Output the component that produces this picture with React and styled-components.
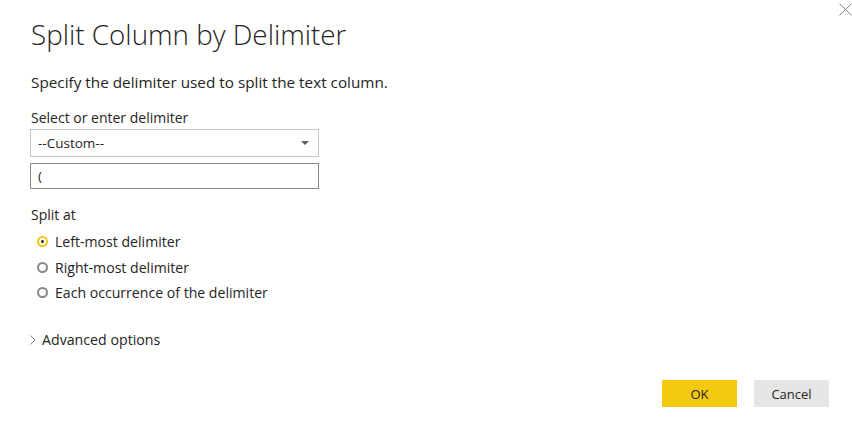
import React, { useState } from "react";
import styled, { createGlobalStyle } from "styled-components";

const GlobalStyle = createGlobalStyle`
  html, body {
    margin: 0;
    padding: 0;
    background: #fff;
  }
  body {
    font-family: "Open Sans", "Noto Sans", sans-serif;
    color: #252423;
  }
`;

const Dialog = styled.div`
  position: relative;
  width: 852px;
  height: 427px;
  box-sizing: border-box;
  padding: 14px 23px 0 31px;
  display: flex;
  flex-direction: column;
  background: #fff;
`;

const CloseButton = styled.button`
  position: absolute;
  top: 1px;
  right: -1px;
  width: 16px;
  height: 16px;
  padding: 0;
  border: none;
  background: none;
  display: flex;
  align-items: center;
  justify-content: center;
  cursor: pointer;
`;

const Title = styled.h1`
  margin: 0;
  font-size: 27.8px;
  font-weight: 300;
  line-height: 40px;
  color: #252423;
`;

const Description = styled.p`
  margin: 18px 0 0;
  font-size: 15.3px;
  line-height: 20px;
`;

const Label = styled.div`
  margin-top: ${(p) => p.$top || 0}px;
  font-size: 14px;
  line-height: 20px;
`;

const Field = styled.div`
  width: 289px;
  height: ${(p) => p.$height}px;
  box-sizing: border-box;
  border: 1px solid ${(p) => (p.$dark ? "#8a8886" : "#c8c6c4")};
  margin-top: ${(p) => p.$top || 0}px;
  margin-left: -1px;
  display: flex;
  align-items: center;
  justify-content: space-between;
  padding: 0 9px 0 7px;
  font-size: 13.5px;
`;

const Caret = styled.span`
  width: 0;
  height: 0;
  border-left: 4px solid transparent;
  border-right: 4px solid transparent;
  border-top: 4px solid #605e5c;
`;

const RadioList = styled.div`
  display: flex;
  flex-direction: column;
  margin-top: 4px;
  padding-left: 6px;
`;

const RadioRow = styled.label`
  display: flex;
  align-items: center;
  gap: 7px;
  height: 25.5px;
  font-size: 14.1px;
  cursor: pointer;
`;

const RadioCircle = styled.span`
  width: 11px;
  height: 11px;
  box-sizing: border-box;
  border-radius: 50%;
  border: 2px solid ${(p) => (p.$checked ? "#f2c811" : "#8a8886")};
  display: flex;
  align-items: center;
  justify-content: center;

  &::after {
    content: "";
    width: 3px;
    height: 3px;
    border-radius: 50%;
    background: ${(p) => (p.$checked ? "#252423" : "transparent")};
  }
`;

const Advanced = styled.div`
  margin-top: 24px;
  display: flex;
  align-items: center;
  gap: 6px;
  font-size: 14.2px;
  line-height: 20px;
  margin-left: -1px;
`;

const Footer = styled.div`
  margin-top: auto;
  margin-bottom: 20px;
  display: flex;
  justify-content: flex-end;
  gap: 17px;
`;

const Button = styled.button`
  width: 75px;
  height: 27px;
  border: none;
  padding: 0;
  font-family: inherit;
  font-size: 13px;
  color: #252423;
  background: ${(p) => (p.$primary ? "#f2c811" : "#e6e6e6")};
  cursor: pointer;
`;

const options = [
  "Left-most delimiter",
  "Right-most delimiter",
  "Each occurrence of the delimiter",
];

export default function App() {
  const [split, setSplit] = useState(0);
  return (
    <>
      <GlobalStyle />
      <Dialog>
        <CloseButton aria-label="Close">
          <svg width="13" height="13" viewBox="0 0 13 13">
            <path d="M0.5 0.5 L12.5 12.5 M12.5 0.5 L0.5 12.5" stroke="#8a8886" strokeWidth="1" />
          </svg>
        </CloseButton>
        <Title>Split Column by Delimiter</Title>
        <Description>Specify the delimiter used to split the text column.</Description>
        <Label $top={16}>Select or enter delimiter</Label>
        <Field $height={28} $top={1}>
          <span>--Custom--</span>
          <Caret />
        </Field>
        <Field $height={26} $top={6} $dark>
          <span>(</span>
        </Field>
        <Label $top={16}>Split at</Label>
        <RadioList>
          {options.map((o, i) => (
            <RadioRow key={o} onClick={() => setSplit(i)}>
              <RadioCircle $checked={split === i} />
              {o}
            </RadioRow>
          ))}
        </RadioList>
        <Advanced>
          <svg width="6" height="10" viewBox="0 0 6 10">
            <path d="M0.5 0.5 L5 5 L0.5 9.5" fill="none" stroke="#8a8886" strokeWidth="1" />
          </svg>
          Advanced options
        </Advanced>
        <Footer>
          <Button $primary>OK</Button>
          <Button>Cancel</Button>
        </Footer>
      </Dialog>
    </>
  );
}
